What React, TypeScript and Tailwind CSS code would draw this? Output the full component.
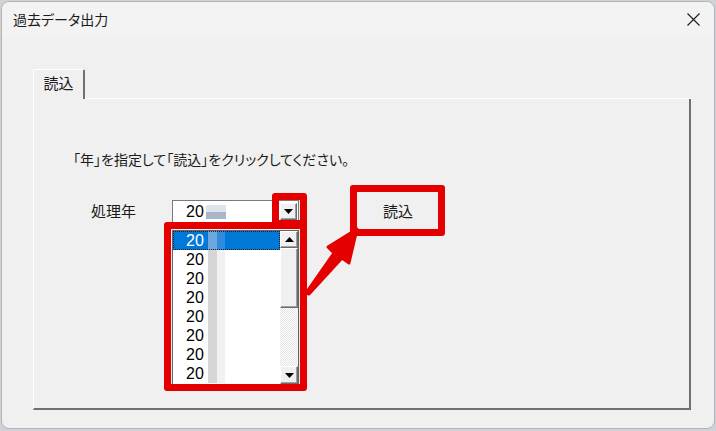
const jp = "font-['Noto_Sans_CJK_JP','Noto_Sans',sans-serif] [font-feature-settings:'palt']";
const num = "font-['Liberation_Sans','Noto_Sans_CJK_JP',sans-serif]";

const raised =
  'border border-t-white border-l-white border-r-[#6b6b6b] border-b-[#6b6b6b] shadow-[inset_-1px_-1px_0_#a0a0a0] bg-[#f0f0f0]';

function Arrow({ up = false }: { up?: boolean }) {
  return (
    <svg width="9" height="5" viewBox="0 0 9 5" className={up ? 'rotate-180' : ''}>
      <path d="M0 0h9L4.5 5z" fill="#000" />
    </svg>
  );
}

function CloseIcon() {
  return (
    <svg width="13" height="13" viewBox="0 0 13 13">
      <path d="M0.5 0.5L12.5 12.5M12.5 0.5L0.5 12.5" stroke="#1a1a1a" strokeWidth="1.1" />
    </svg>
  );
}

// blurred digits that follow "20" in the screenshot
function Blur({ selected = false, first = false }: { selected?: boolean; first?: boolean }) {
  if (first) {
    return (
      <span className="ml-[2px] flex h-[14px] w-[20px] flex-col">
        <span className="h-1/2 bg-[#dfe3ea]" />
        <span className="h-1/2 bg-[#a9b6c8]" />
      </span>
    );
  }
  return (
    <span className="ml-[4px] flex h-full">
      <span className={`w-[9px] ${selected ? 'bg-[#6fa6de]' : 'bg-[#d6d6d6]'}`} />
      <span className={`w-[8px] ${selected ? 'bg-[#2f8ae0]' : 'bg-[#f1f1f1]'}`} />
    </span>
  );
}

function YearList() {
  const rows = Array.from({ length: 8 });
  return (
    <div className="absolute left-0 top-[30px] z-10 flex h-[155px] w-[127px] border border-[#646464] bg-white">
      <div className="flex flex-1 flex-col">
        {rows.map((_, i) => (
          <div
            key={i}
            className={`flex h-[19px] items-center pl-[13px] text-[16px] ${num} ${
              i === 0 ? 'bg-[#0078d7] text-white outline-1 outline-dotted outline-offset-[-1px] outline-[#222]' : 'text-black'
            }`}
          >
            <span>20</span>
            <Blur selected={i === 0} />
          </div>
        ))}
      </div>
      <div className="flex w-[18px] flex-col bg-[image:repeating-conic-gradient(#e4e4e4_0_25%,#ffffff_0_50%)] bg-[length:2px_2px]">
        <div className={`flex h-[17px] items-center justify-center ${raised}`}>
          <Arrow up />
        </div>
        <div className={`h-[60px] ${raised}`} />
        <div className="flex-1" />
        <div className={`flex h-[18px] items-center justify-center ${raised}`}>
          <Arrow />
        </div>
      </div>
    </div>
  );
}

export default function App() {
  return (
    <div className="relative h-[431px] w-[716px] overflow-hidden bg-[#cfd3d8] pl-[1px] pr-[1px] pt-[1px]">
      <div className={`flex h-[428px] flex-col rounded-[8px] border border-[#b4b4b4] bg-[#f0f0f0] ${jp}`}>
        <div className="flex h-[35px] items-center justify-between rounded-t-[8px] bg-[#f3f3f3] pl-[11px] pr-[14px]">
          <span className="text-[14px] text-[#1a1a1a]">過去データ出力</span>
          <CloseIcon />
        </div>

        <div className="pl-[31px] pr-[23px] pt-[32px]">
          <div className="flex">
            <div className="flex h-[30px] w-[52px] items-center justify-center rounded-tr-[2px] border-l border-t border-r-2 border-l-white border-t-white border-r-[#707070] pb-[2px] text-[15px] text-[#1a1a1a]">
              読込
            </div>
            <div className="flex-1 border-b border-white" />
          </div>

          <div className="h-[311px] border-b-2 border-l border-r-2 border-b-[#707070] border-l-white border-r-[#707070] pl-[39px] pt-[50px]">
            <p className="text-[14px] leading-[20px] text-[#1a1a1a]">
              「年」を指定して「読込」をクリックしてください。
            </p>

            <div className="mt-[20px] flex h-[45px] items-center">
              <span className="ml-[18px] w-[81px] text-[15px] text-[#1a1a1a]">処理年</span>
              <div className="relative">
                <div className="flex h-[23px] w-[127px] items-center border border-[#7a7a7a] bg-white pl-[13px] pr-[1px]">
                  <span className={`text-[16px] ${num}`}>20</span>
                  <Blur first />
                  <div className="flex-1" />
                  <div className={`flex h-[17px] w-[17px] items-center justify-center ${raised}`}>
                    <Arrow />
                  </div>
                </div>
                <YearList />
              </div>
              <button className={`ml-[55px] flex h-[45px] w-[88px] items-center justify-center text-[15px] text-[#1a1a1a] ${raised}`}>
                読込
              </button>
            </div>
          </div>
        </div>
      </div>

      {/* red annotation overlays */}
      <div className="pointer-events-none absolute left-[272px] top-[193px] z-20 h-[34px] w-[35px] rounded-[3px] border-[7px] border-[#e50000]" />
      <div className="pointer-events-none absolute left-[164px] top-[222px] z-20 h-[169px] w-[143px] rounded-[3px] border-[7px] border-[#e50000]" />
      <div className="pointer-events-none absolute left-[350px] top-[185px] z-20 h-[51px] w-[95px] rounded-[3px] border-[7px] border-[#e50000]" />
      <svg className="pointer-events-none absolute left-0 top-0 z-20" width="716" height="431">
        <path
          d="M306 293 L334 253 L328 247 L357 229 L349 263 L342 258 L309 294 Z"
          fill="#e50000"
          stroke="#e50000"
          strokeWidth="3"
          strokeLinejoin="round"
        />
      </svg>
    </div>
  );
}
